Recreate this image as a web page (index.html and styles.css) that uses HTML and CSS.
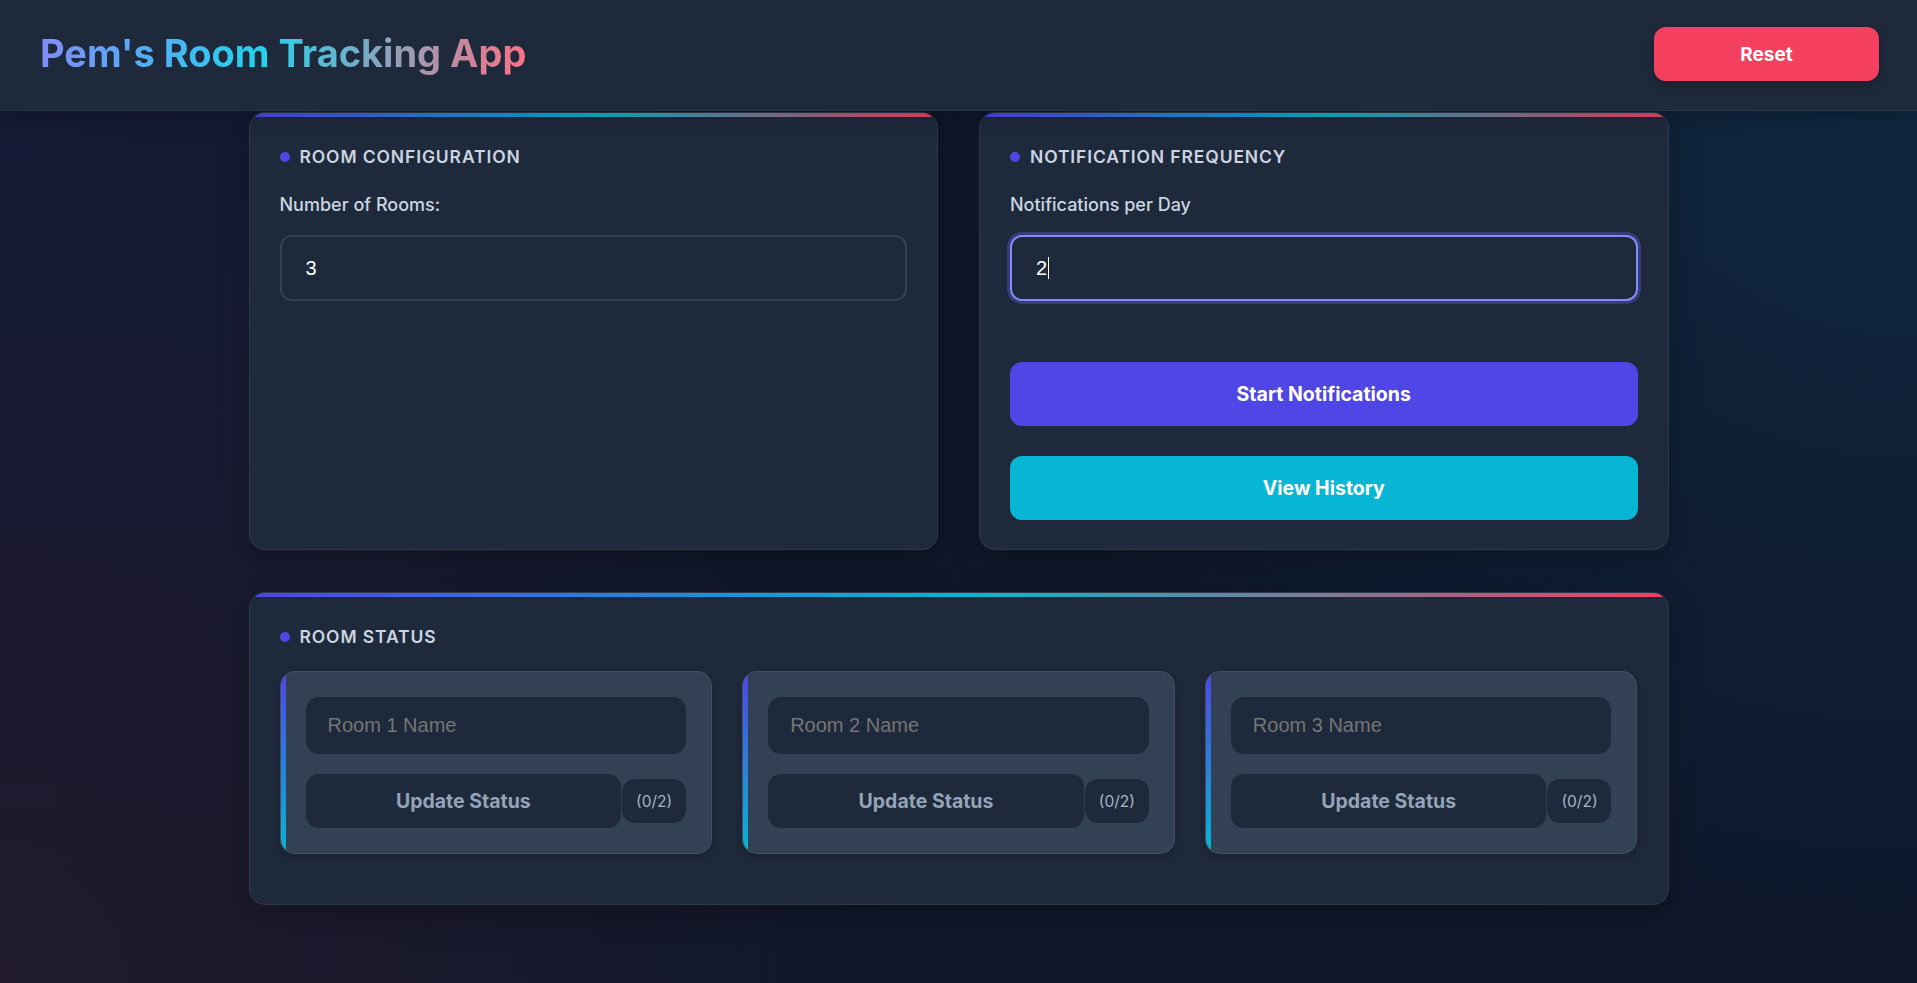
FILE: index.html
```html
<!DOCTYPE html>
<html lang="en">
<head>
<meta charset="utf-8">
<title>Pem's Room Tracking App</title>
<link rel="stylesheet" href="styles.css">
</head>
<body>
<header class="topbar">
  <h1 class="brand">Pem's Room Tracking App</h1>
  <button class="btn-reset" type="button">Reset</button>
</header>
<main class="container">
  <div class="top-grid">
    <section class="card">
      <h2 class="card-title"><span class="dot"></span>Room Configuration</h2>
      <label class="field-label" for="rooms">Number of Rooms:</label>
      <input id="rooms" class="field" type="text" value="3">
    </section>
    <section class="card">
      <h2 class="card-title"><span class="dot"></span>Notification Frequency</h2>
      <label class="field-label" for="freq">Notifications per Day</label>
      <div id="freq" class="field focused"><span>2</span><span class="caret"></span></div>
      <div class="actions">
        <button class="btn btn-primary" type="button">Start Notifications</button>
        <button class="btn btn-cyan" type="button">View History</button>
      </div>
    </section>
  </div>
  <section class="card status-card">
    <h2 class="card-title tight"><span class="dot"></span>Room Status</h2>
    <div class="rooms">
      <div class="room">
        <input class="room-name" type="text" placeholder="Room 1 Name">
        <div class="room-row">
          <button class="btn-update" type="button">Update Status</button>
          <span class="count">(0/2)</span>
        </div>
      </div>
      <div class="room">
        <input class="room-name" type="text" placeholder="Room 2 Name">
        <div class="room-row">
          <button class="btn-update" type="button">Update Status</button>
          <span class="count">(0/2)</span>
        </div>
      </div>
      <div class="room">
        <input class="room-name" type="text" placeholder="Room 3 Name">
        <div class="room-row">
          <button class="btn-update" type="button">Update Status</button>
          <span class="count">(0/2)</span>
        </div>
      </div>
    </div>
  </section>
</main>
</body>
</html>
```

FILE: styles.css
```css
* { box-sizing: border-box; }

html, body { height: 100%; }

body {
  margin: 0;
  font-family: Inter, "Noto Sans", sans-serif;
  color: #e2e8f0;
  background:
    radial-gradient(ellipse 950px 950px at 0% 100%, rgba(244, 63, 94, 0.08), transparent 100%),
    radial-gradient(ellipse 950px 900px at 0% 0%, rgba(79, 70, 229, 0.07), transparent 100%),
    radial-gradient(ellipse 1000px 1000px at 100% 0%, rgba(14, 165, 233, 0.12), transparent 100%),
    #0f172a;
  overflow: hidden;
}

.topbar {
  display: flex;
  align-items: center;
  justify-content: space-between;
  padding: 27px 38px 29px 40px;
  background: #1e293b;
  border-bottom: 1px solid rgba(255, 255, 255, 0.06);
  box-shadow: 0 4px 20px rgba(0, 0, 0, 0.25);
  position: relative;
  z-index: 2;
}

.brand {
  margin: 0;
  font-size: 38px;
  font-weight: 700;
  letter-spacing: 0;
  background: linear-gradient(90deg, #818cf8 0%, #22d3ee 45%, #fb7185 100%);
  -webkit-background-clip: text;
  background-clip: text;
  color: transparent;
  line-height: 1.2;
}

.btn-reset {
  width: 225px;
  height: 54px;
  border: none;
  border-radius: 12px;
  background: #f43f5e;
  color: #fff;
  font-family: Inter, sans-serif;
  font-size: 19px;
  font-weight: 700;
  box-shadow: 0 4px 14px rgba(0, 0, 0, 0.25);
}

.container {
  width: 1420px;
  margin: 1px auto 0;
}

.top-grid {
  display: grid;
  grid-template-columns: 1fr 1fr;
  gap: 41px;
  margin-bottom: 42px;
}

.card {
  position: relative;
  background: #1e293b;
  border: 1px solid rgba(255, 255, 255, 0.07);
  border-radius: 16px;
  padding: 33px 30px 29px;
  box-shadow: 0 10px 30px rgba(0, 0, 0, 0.25);
  overflow: hidden;
}

.card::before {
  content: "";
  position: absolute;
  left: 0;
  right: 0;
  top: 0;
  height: 4px;
  background: linear-gradient(90deg, #4f46e5, #06b6d4 50%, #f43f5e);
}

.card-title {
  display: flex;
  align-items: center;
  gap: 10px;
  margin: 0 0 27px;
  font-size: 17.5px;
  font-weight: 600;
  letter-spacing: 0.05em;
  text-transform: uppercase;
  color: #cbd5e1;
  line-height: 21px;
}

.card-title.tight { margin-bottom: 24px; }

.dot {
  width: 10px;
  height: 10px;
  border-radius: 50%;
  background: #4f46e5;
  flex: none;
}

.field-label {
  display: block;
  font-size: 18px;
  font-weight: 500;
  color: #cbd5e1;
  line-height: 21px;
  margin-bottom: 20px;
}

.field {
  display: flex;
  align-items: center;
  width: 100%;
  height: 66px;
  padding: 0 24px;
  border: 2px solid #334155;
  border-radius: 12px;
  background: #1e293b;
  color: #fff;
  font-family: "Liberation Sans", Arial, sans-serif;
  font-size: 20px;
  outline: none;
}

.field.focused {
  border-color: #818cf8;
  box-shadow: 0 0 0 3px rgba(99, 102, 241, 0.35);
}

.caret {
  display: inline-block;
  width: 1px;
  height: 22px;
  background: #fff;
  margin-left: 1px;
}

.actions {
  display: flex;
  flex-direction: column;
  gap: 30px;
  margin-top: 61px;
}

.btn {
  height: 64px;
  border: none;
  border-radius: 12px;
  color: #fff;
  font-family: Inter, sans-serif;
  font-size: 19.5px;
  font-weight: 700;
}

.btn-primary { background: #4f46e5; }
.btn-cyan { background: #06b6d4; }

.status-card { padding-bottom: 50px; }

.rooms {
  display: grid;
  grid-template-columns: repeat(3, 1fr);
  gap: 30px;
}

.room {
  position: relative;
  display: flex;
  flex-direction: column;
  gap: 20px;
  padding: 25px;
  background: #334155;
  border: 1px solid rgba(255, 255, 255, 0.08);
  border-radius: 15px;
  overflow: hidden;
  box-shadow: 0 4px 12px rgba(0, 0, 0, 0.2);
}

.room::before {
  content: "";
  position: absolute;
  left: 0;
  top: 0;
  bottom: 0;
  width: 5px;
  background: linear-gradient(180deg, #4f46e5, #06b6d4);
}

.room-name {
  width: 100%;
  height: 57px;
  padding: 0 22px;
  border: none;
  border-radius: 13px;
  background: #1e293b;
  color: #fff;
  font-family: "Liberation Sans", Arial, sans-serif;
  font-size: 20px;
  outline: none;
}

.room-name::placeholder { color: #757575; }

.room-row {
  display: flex;
  align-items: center;
  gap: 1px;
}

.btn-update {
  flex: 1;
  height: 54px;
  border: none;
  border-radius: 13px;
  background: #1e293b;
  color: #94a3b8;
  font-family: Inter, sans-serif;
  font-size: 19.5px;
  font-weight: 700;
}

.count {
  width: 64px;
  height: 44px;
  display: flex;
  align-items: center;
  justify-content: center;
  border-radius: 13px;
  background: #1e293b;
  color: #a9b4c4;
  font-size: 15.5px;
}
```
